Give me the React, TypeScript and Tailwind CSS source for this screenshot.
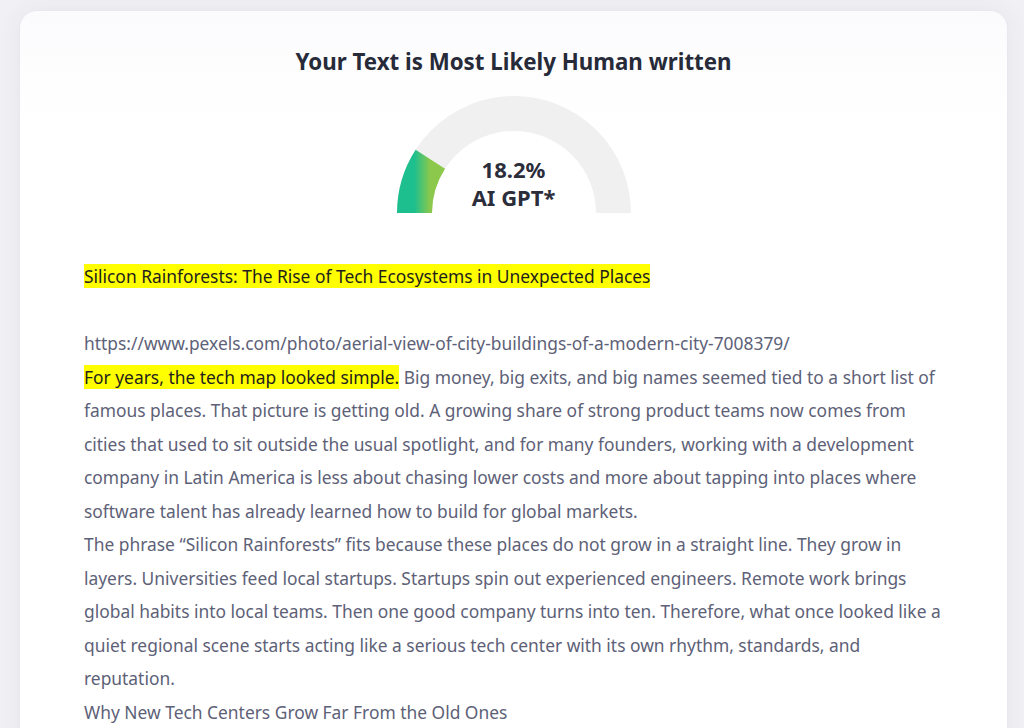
import React from "react";

function Gauge() {
  const cx = 117;
  const cy = 117;
  const r = 99.5;
  const t = 0.182 * Math.PI;
  const ex = cx - r * Math.cos(t);
  const ey = cy - r * Math.sin(t);
  return (
    <div className="relative mx-auto h-[117px] w-[234px]">
      <svg width="234" height="117" viewBox="0 0 234 117" className="block">
        <defs>
          <linearGradient id="g" x1="0" y1="0" x2="1" y2="0">
            <stop offset="0" stopColor="#1dbf8e" />
            <stop offset="1" stopColor="#8cc84b" />
          </linearGradient>
        </defs>
        <path
          d={`M ${cx - r} ${cy} A ${r} ${r} 0 0 1 ${cx + r} ${cy}`}
          fill="none"
          stroke="#f0f0f0"
          strokeWidth="35"
        />
        <path
          d={`M ${cx - r} ${cy} A ${r} ${r} 0 0 1 ${ex} ${ey}`}
          fill="none"
          stroke="url(#g)"
          strokeWidth="35"
        />
      </svg>
      <div className="absolute inset-x-0 bottom-[2px] flex flex-col items-center text-[22px] font-bold leading-[28px] text-[#2b2d3a]">
        <div>18.2%</div>
        <div>AI GPT*</div>
      </div>
    </div>
  );
}

export default function App() {
  return (
    <div
      className="min-h-[728px] bg-[#f1f1f5] pt-[10px] pl-[19px] pr-[16px]"
      style={{ fontFamily: '"Noto Sans", "Open Sans", sans-serif' }}
    >
      <div className="h-[760px] w-[989px] rounded-[18px] border border-[#e8e8ef] bg-white bg-gradient-to-b from-[#fbfbfd] to-white to-[110px] pl-[64px] pr-[30px] pt-[36px] shadow-[0_0_24px_rgba(30,30,60,0.06)]">
        <h1 className="pr-[34px] text-center text-[22.3px] font-bold leading-[30px] text-[#272a38]">
          Your Text is Most Likely Human written
        </h1>
        <div className="mt-[19px] pr-[34px]">
          <Gauge />
        </div>
        <div className="mt-[47px] whitespace-nowrap text-[17.4px] leading-[33.5px] text-[#5d6177]">
          <div>
            <span className="bg-[#ffff00] text-[#1e1e1e]">
              Silicon Rainforests: The Rise of Tech Ecosystems in Unexpected Places
            </span>
          </div>
          <div>&nbsp;</div>
          <div>https://www.pexels.com/photo/aerial-view-of-city-buildings-of-a-modern-city-7008379/</div>
          <div>
            <span className="bg-[#ffff00] text-[#1e1e1e]">For years, the tech map looked simple.</span> Big
            money, big exits, and big names seemed tied to a short list of
            <br />
            famous places. That picture is getting old. A growing share of strong product teams now comes from
            <br />
            cities that used to sit outside the usual spotlight, and for many founders, working with a development
            <br />
            company in Latin America is less about chasing lower costs and more about tapping into places where
            <br />
            software talent has already learned how to build for global markets.
          </div>
          <div>
            The phrase “Silicon Rainforests” fits because these places do not grow in a straight line. They grow in
            <br />
            layers. Universities feed local startups. Startups spin out experienced engineers. Remote work brings
            <br />
            global habits into local teams. Then one good company turns into ten. Therefore, what once looked like a
            <br />
            quiet regional scene starts acting like a serious tech center with its own rhythm, standards, and
            <br />
            reputation.
          </div>
          <div>Why New Tech Centers Grow Far From the Old Ones</div>
        </div>
      </div>
    </div>
  );
}
